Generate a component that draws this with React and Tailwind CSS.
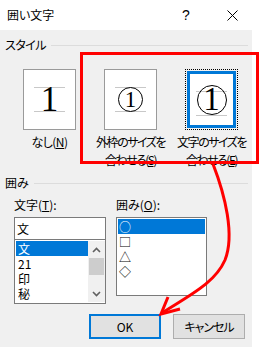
import React from "react";

const font = "font-['Noto_Sans_CJK_JP','Noto_Sans',sans-serif] [font-feature-settings:'palt']";

function Guides({ inset = "left-[10px] right-[10px]" }) {
  return (
    <>
      <div className={`absolute top-[17px] h-px bg-[#c8c8c8] ${inset}`} />
      <div className={`absolute top-[41px] h-px bg-[#c8c8c8] ${inset}`} />
    </>
  );
}

function Chevron({ up }) {
  return (
    <svg width="9" height="6" viewBox="0 0 9 6">
      <polyline
        points={up ? "1,5 4.5,1.5 8,5" : "1,1 4.5,4.5 8,1"}
        fill="none"
        stroke="#606060"
        strokeWidth="1.6"
      />
    </svg>
  );
}

export default function App() {
  return (
    <div className={`relative w-[260px] h-[347px] bg-white text-black overflow-hidden ${font}`}>
      {/* title bar */}
      <div className="flex h-[30px] items-center">
        <div className="pl-[7px] text-[12px] leading-none">囲い文字</div>
        <div className="ml-auto flex h-full">
          <div className="flex w-[46px] items-center justify-center text-[14px] font-['Liberation_Sans',sans-serif]">?</div>
          <div className="flex w-[46px] items-center justify-center">
            <svg width="11" height="11" viewBox="0 0 11 11">
              <path d="M0.5 0.5 L10.5 10.5 M10.5 0.5 L0.5 10.5" stroke="#000" strokeWidth="1" />
            </svg>
          </div>
          <div className="w-[5px]" />
        </div>
      </div>

      {/* body */}
      <div className="flex h-[317px] w-[252px] flex-col bg-[#f0f0f0]">
        {/* スタイル header */}
        <div className="mt-[8px] flex h-[14px] items-center pl-[5px] pr-[4px]">
          <span className="text-[12px] leading-none tracking-[-0.5px]">スタイル</span>
          <div className="ml-[5px] h-px flex-1 bg-[#dcdcdc]" />
        </div>

        {/* style boxes */}
        <div className="mt-[17px] grid grid-cols-[81px_81px_81px] pl-[9px]">
          <div className="flex flex-col items-center">
            <div className="relative flex h-[61px] w-[53px] items-center justify-center border border-[#9a9a9a] bg-white">
              <Guides />
              <span className="relative font-['Liberation_Serif',serif] text-[35px] leading-none font-light [font-feature-settings:normal]">1</span>
            </div>
            <div className="mt-[3px] text-center text-[12px] leading-[18px] whitespace-nowrap tracking-[-0.5px]">
              なし(<span className="underline">N</span>)
            </div>
          </div>

          <div className="flex flex-col items-center">
            <div className="relative flex h-[61px] w-[53px] items-center justify-center border border-[#9a9a9a] bg-white">
              <Guides />
              <div className="relative flex h-[25px] w-[25px] items-center justify-center rounded-full border border-black bg-white">
                <span className="font-['Liberation_Serif',serif] text-[23px] leading-none [font-feature-settings:normal]">1</span>
              </div>
            </div>
            <div className="mt-[3px] text-center text-[12px] leading-[18px] whitespace-nowrap tracking-[-1.5px]">
              外枠のサイズを
              <br />
              合わせる(<span className="underline">S</span>)
            </div>
          </div>

          <div className="flex flex-col items-center">
            <div className="flex h-[61px] w-[53px] border border-dotted border-black p-px">
              <div className="relative flex flex-1 items-center justify-center border-[3px] border-[#0078d7] bg-white">
                <Guides inset="left-[6px] right-[6px]" />
                <div className="relative flex h-[30px] w-[30px] items-center justify-center rounded-full border border-black bg-transparent">
                  <span className="font-['Liberation_Serif',serif] text-[33px] leading-none [font-feature-settings:normal]">1</span>
                </div>
              </div>
            </div>
            <div className="mt-[3px] text-center text-[12px] leading-[18px] whitespace-nowrap tracking-[-1.5px]">
              文字のサイズを
              <br />
              合わせる(<span className="underline">E</span>)
            </div>
          </div>
        </div>

        {/* 囲み header */}
        <div className="mt-[7px] flex h-[14px] items-center pl-[5px] pr-[4px]">
          <span className="text-[12px] leading-none">囲み</span>
          <div className="ml-[5px] h-px flex-1 bg-[#dcdcdc]" />
        </div>

        {/* lower section */}
        <div className="mt-[7px] flex gap-[10px] pl-[14px]">
          <div className="flex w-[92px] flex-col">
            <div className="h-[16px] text-[12px] leading-[16px]">
              文字(<span className="underline">T</span>):
            </div>
            <div className="mt-[4px] flex h-[23px] items-center border border-[#7a7a7a] bg-white pl-[2px] text-[12px] leading-none">
              文
            </div>
            <div className="flex h-[64px] border border-t-0 border-[#7a7a7a] bg-white py-px">
              <div className="flex flex-1 flex-col pl-px text-[12px]">
                <div className="h-[15px] bg-[#0078d7] pl-[2px] leading-[15px] text-white">文</div>
                <div className="h-[15px] pl-[2px] leading-[15px]">21</div>
                <div className="h-[15px] pl-[2px] leading-[15px]">印</div>
                <div className="h-[15px] pl-[2px] leading-[15px]">秘</div>
              </div>
              <div className="flex w-[17px] flex-col bg-[#f0f0f0]">
                <div className="flex h-[17px] items-center justify-center"><Chevron up /></div>
                <div className="mx-[1px] h-[17px] bg-[#cdcdcd]" />
                <div className="flex-1" />
                <div className="flex h-[17px] items-center justify-center"><Chevron /></div>
              </div>
            </div>
          </div>

          <div className="flex w-[91px] flex-col">
            <div className="h-[16px] text-[12px] leading-[16px]">
              囲み(<span className="underline">O</span>):
            </div>
            <div className="mt-[4px] flex h-[79px] flex-col border border-[#7a7a7a] bg-white px-px py-px text-[12px]">
              <div className="h-[15px] bg-[#0078d7] pl-px leading-[15px] text-white">○</div>
              <div className="h-[15px] pl-px leading-[15px]">□</div>
              <div className="h-[15px] pl-px leading-[15px]">△</div>
              <div className="h-[15px] pl-px leading-[15px]">◇</div>
            </div>
          </div>
        </div>

        {/* buttons */}
        <div className="mt-auto mb-[8px] flex justify-end gap-[12px] pr-[7px]">
          <div className="flex h-[25px] w-[72px] items-center justify-center border-2 border-[#0078d7] bg-[#e1e1e1] text-[12px] leading-none">OK</div>
          <div className="flex h-[25px] w-[72px] items-center justify-center border border-[#adadad] bg-[#e1e1e1] text-[12px] leading-none tracking-[-1px]">キャンセル</div>
        </div>
      </div>

      {/* red annotation overlay */}
      <svg className="pointer-events-none absolute left-0 top-0" width="260" height="347" viewBox="0 0 260 347">
        <rect x="81.5" y="53.5" width="176" height="109" fill="none" stroke="#ff0000" strokeWidth="3" />
        <path d="M213 164 C225 195 235 235 225 260 C215 283 190 295 162 313" fill="none" stroke="#ff0000" strokeWidth="3" />
        <polyline points="180,309 161,314 168,297" fill="none" stroke="#ff0000" strokeWidth="3" strokeLinejoin="miter" />
      </svg>
    </div>
  );
}
